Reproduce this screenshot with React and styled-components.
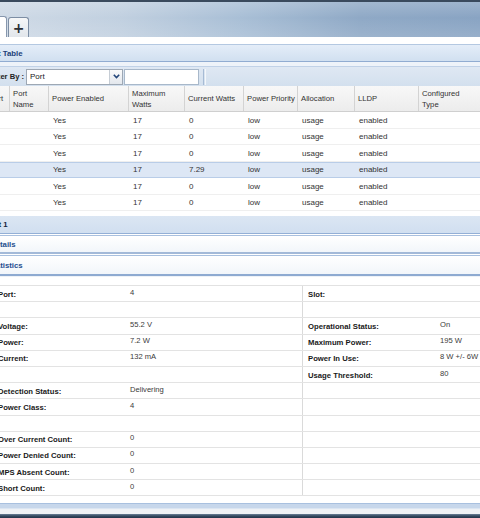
import React from 'react';
import styled, { createGlobalStyle } from 'styled-components';

const GlobalStyle = createGlobalStyle`
  html, body {
    margin: 0;
    padding: 0;
    background: #ffffff;
  }
  body {
    width: 480px;
    height: 518px;
    overflow: hidden;
    font-family: "Liberation Sans", Arial, sans-serif;
  }
`;

const columns = [
  { label: 'Port', w: 23 },
  { label: 'Port\nName', w: 39 },
  { label: 'Power Enabled', w: 80 },
  { label: 'Maximum\nWatts', w: 56 },
  { label: 'Current Watts', w: 59 },
  { label: 'Power Priority', w: 54 },
  { label: 'Allocation', w: 57 },
  { label: 'LLDP', w: 64 },
  { label: 'Configured\nType', w: 80 },
];

const gridCols = columns.map((c) => `${c.w}px`).join(' ');

const ports = [
  ['1', '', 'Yes', '17', '0', 'low', 'usage', 'enabled', ''],
  ['2', '', 'Yes', '17', '0', 'low', 'usage', 'enabled', ''],
  ['3', '', 'Yes', '17', '0', 'low', 'usage', 'enabled', ''],
  ['4', '', 'Yes', '17', '7.29', 'low', 'usage', 'enabled', ''],
  ['5', '', 'Yes', '17', '0', 'low', 'usage', 'enabled', ''],
  ['6', '', 'Yes', '17', '0', 'low', 'usage', 'enabled', ''],
];

const stats = [
  ['Port:', '4', 'Slot:', ''],
  ['', '', '', ''],
  ['Voltage:', '55.2 V', 'Operational Status:', 'On'],
  ['Power:', '7.2 W', 'Maximum Power:', '195 W'],
  ['Current:', '132 mA', 'Power In Use:', '8 W +/- 6W'],
  ['', '', 'Usage Threshold:', '80'],
  ['Detection Status:', 'Delivering', '', ''],
  ['Power Class:', '4', '', ''],
  ['', '', '', ''],
  ['Over Current Count:', '0', '', ''],
  ['Power Denied Count:', '0', '', ''],
  ['MPS Absent Count:', '0', '', ''],
  ['Short Count:', '0', '', ''],
];

const App = () => {
  return (
    <Page>
      <GlobalStyle />
      <Banner>
        <ActiveTab />
        <PlusTab>+</PlusTab>
      </Banner>
      <WhiteGap />
      <PanelTitle>
        <Cut $by={15}>Port Table</Cut>
      </PanelTitle>
      <Strip />
      <Toolbar>
        <FilterLabel>Filter By :</FilterLabel>
        <Select>
          <SelectText>Port</SelectText>
          <SelectButton>
            <svg width="7" height="5" viewBox="0 0 7 5">
              <polyline points="0.8,0.8 3.5,3.6 6.2,0.8" fill="none" stroke="#24467a" strokeWidth="1.6" />
            </svg>
          </SelectButton>
        </Select>
        <Input />
        <ToolSep />
      </Toolbar>
      <GridHeader>
        {columns.map((c, i) => (
          <HeadCell key={i} $first={i === 0}>{c.label}</HeadCell>
        ))}
      </GridHeader>
      {ports.map((row, r) => (
        <DataRow key={r} $highlight={r === 3}>
          {row.map((v, i) => (
            <Cell key={i}>{v}</Cell>
          ))}
        </DataRow>
      ))}
      <SectionBar>
        <Cut $by={14.5}>Port 1</Cut>
      </SectionBar>
      <AccordionHeader>
        <Cut $by={10}>Details</Cut>
      </AccordionHeader>
      <AccordionHeader $open>
        <Cut $by={12}>Statistics</Cut>
      </AccordionHeader>
      <PropSpacer />
      <PropGrid>
        {stats.map((s, i) => (
          <PropRow key={i}>
            <PropLabel>{s[0]}</PropLabel>
            <PropValue>{s[1]}</PropValue>
            <PropLabel $right>{s[2]}</PropLabel>
            <PropValue>{s[3]}</PropValue>
          </PropRow>
        ))}
      </PropGrid>
      <FooterGap />
      <BlueBand />
      <LightStrip />
      <Taskbar />
    </Page>
  );
};

export default App;

const Page = styled.div`
  display: flex;
  flex-direction: column;
  width: 480px;
  height: 518px;
  overflow: hidden;
  background: #ffffff;
`;

const Banner = styled.div`
  box-sizing: border-box;
  height: 37px;
  flex-shrink: 0;
  border-top: 2px solid #3a4a5d;
  display: flex;
  align-items: flex-end;
  gap: 1px;
  background:
    linear-gradient(180deg, rgba(255,255,255,0.18) 0%, rgba(255,255,255,0) 45%, rgba(255,255,255,0.12) 100%),
    linear-gradient(90deg, #cfdae6 0%, #c1d0e0 25%, #a9bfd6 50%, #8fa9c6 75%, #89a4c3 100%);
`;

const ActiveTab = styled.div`
  box-sizing: border-box;
  width: 40px;
  height: 21px;
  margin-left: -33px;
  background: #ffffff;
  border: 1px solid #8797ad;
  border-bottom: none;
  border-radius: 3px 3px 0 0;
`;

const PlusTab = styled.div`
  box-sizing: border-box;
  width: 21px;
  height: 20px;
  display: flex;
  align-items: center;
  justify-content: center;
  background: linear-gradient(180deg, #f6f7f8 0%, #e2e6eb 100%);
  border: 1px solid #7d8ea4;
  border-bottom: none;
  border-radius: 3px 3px 0 0;
  font-family: "DejaVu Sans", sans-serif;
  font-size: 14px;
  font-weight: bold;
  color: #2a2f36;
  line-height: 1;
`;

const WhiteGap = styled.div`
  height: 7px;
  flex-shrink: 0;
`;

const Cut = styled.span`
  margin-left: -${(p) => p.$by}px;
  white-space: nowrap;
`;

const PanelTitle = styled.div`
  box-sizing: border-box;
  height: 18px;
  flex-shrink: 0;
  display: flex;
  align-items: center;
  border-top: 1px solid #b4c8e1;
  border-bottom: 1px solid #91acd1;
  background: linear-gradient(180deg, #e4edf8 0%, #d1e0f0 100%);
  font-size: 7.8px;
  font-weight: bold;
  color: #1d3f78;
`;

const Strip = styled.div`
  box-sizing: border-box;
  height: 5px;
  flex-shrink: 0;
  background: #eef3f9;
  border-bottom: 1px solid #c1d2e7;
`;

const Toolbar = styled.div`
  box-sizing: border-box;
  height: 19px;
  flex-shrink: 0;
  display: flex;
  align-items: center;
  background: linear-gradient(180deg, #dfe8f3 0%, #d3e0ee 100%);
`;

const FilterLabel = styled.span`
  margin-left: -11px;
  margin-right: 2px;
  font-size: 7.6px;
  font-weight: bold;
  color: #222222;
  white-space: nowrap;
`;

const Select = styled.div`
  box-sizing: border-box;
  width: 97px;
  height: 16px;
  display: flex;
  background: #ffffff;
  border: 1px solid #9ea8b4;
`;

const SelectText = styled.div`
  flex: 1;
  display: flex;
  align-items: center;
  padding-left: 3px;
  font-size: 8px;
  color: #222222;
`;

const SelectButton = styled.div`
  width: 12px;
  display: flex;
  align-items: center;
  justify-content: center;
  border-left: 1px solid #c6cdd5;
  background: linear-gradient(180deg, #fbfbfb 0%, #e3e7ed 100%);
`;

const Input = styled.div`
  box-sizing: border-box;
  width: 75px;
  height: 16px;
  margin-left: 1px;
  background: #ffffff;
  border: 1px solid #a8b8ca;
`;

const ToolSep = styled.div`
  width: 1px;
  height: 16px;
  margin-left: 4px;
  border-left: 1px solid #a6bbd5;
  border-right: 1px solid #f3f7fb;
`;

const GridHeader = styled.div`
  box-sizing: border-box;
  display: grid;
  grid-template-columns: ${gridCols};
  height: 26px;
  flex-shrink: 0;
  margin-left: -14px;
  background: linear-gradient(180deg, #f8f8f8 0%, #ececec 100%);
  border-bottom: 1px solid #cfcfcf;
`;

const HeadCell = styled.div`
  display: flex;
  align-items: center;
  padding-left: 3px;
  border-left: ${(p) => (p.$first ? 'none' : '1px solid #d3d3d3')};
  font-size: 7.7px;
  line-height: 11px;
  color: #333333;
  white-space: pre;
  overflow: hidden;
`;

const DataRow = styled.div`
  box-sizing: border-box;
  display: grid;
  grid-template-columns: ${gridCols};
  height: 16.5px;
  flex-shrink: 0;
  margin-left: -14px;
  background: ${(p) => (p.$highlight ? '#dde7f5' : '#ffffff')};
  border-top: 1px solid ${(p) => (p.$highlight ? '#b9cde8' : 'transparent')};
  border-bottom: 1px solid ${(p) => (p.$highlight ? '#b9cde8' : '#efefef')};
`;

const Cell = styled.div`
  display: flex;
  align-items: center;
  padding-left: 5px;
  font-size: 8px;
  color: #333333;
`;

const SectionBar = styled.div`
  box-sizing: border-box;
  height: 18px;
  flex-shrink: 0;
  margin-top: 5px;
  display: flex;
  align-items: center;
  background: linear-gradient(180deg, #dbe6f3 0%, #d1dff0 100%);
  border-bottom: 1px solid #93afd6;
  font-size: 7.8px;
  font-weight: bold;
  color: #14243a;
`;

const AccordionHeader = styled.div`
  box-sizing: border-box;
  height: ${(p) => (p.$open ? '21px' : '19px')};
  flex-shrink: 0;
  margin-top: 1px;
  display: flex;
  align-items: center;
  background: linear-gradient(180deg, #ffffff 0%, #f2f6fa 100%);
  border-top: 1px solid #a9c0df;
  border-bottom: ${(p) => (p.$open ? '2px solid #8eaad1' : '2px double #a3b9d8')};
  font-size: 7.8px;
  font-weight: bold;
  color: #1f4f8f;
`;

const PropSpacer = styled.div`
  box-sizing: border-box;
  height: 9px;
  flex-shrink: 0;
  border-top: 1px solid #eef2f7;
`;

const PropGrid = styled.div`
  display: flex;
  flex-direction: column;
  border-top: 1px solid #e2e2e2;
  flex-shrink: 0;
`;

const PropRow = styled.div`
  box-sizing: border-box;
  display: grid;
  grid-template-columns: 132px 172px 138px 1fr;
  height: 16.2px;
  margin-left: -2px;
  border-bottom: 1px solid #e3e3e3;
`;

const PropLabel = styled.div`
  display: flex;
  align-items: center;
  padding-top: 1px;
  padding-left: ${(p) => (p.$right ? '5px' : '0')};
  border-left: ${(p) => (p.$right ? '1px solid #dadada' : 'none')};
  font-size: 7.7px;
  font-weight: bold;
  color: #1a1a1a;
  white-space: nowrap;
`;

const PropValue = styled.div`
  display: flex;
  align-items: center;
  padding-bottom: 3px;
  font-size: 7.6px;
  color: #3a3a3a;
  white-space: nowrap;
`;

const FooterGap = styled.div`
  height: 7px;
  flex-shrink: 0;
`;

const BlueBand = styled.div`
  box-sizing: border-box;
  height: 6px;
  flex-shrink: 0;
  background: #c7d7eb;
  border-top: 1px solid #a8c0df;
  border-bottom: 1px solid #dbe5f1;
`;

const LightStrip = styled.div`
  height: 5px;
  flex-shrink: 0;
  background: #eef1f5;
`;

const Taskbar = styled.div`
  flex: 1;
  background: linear-gradient(180deg, #6a7f97 0px, #34495f 2px, #22344a 100%);
`;
